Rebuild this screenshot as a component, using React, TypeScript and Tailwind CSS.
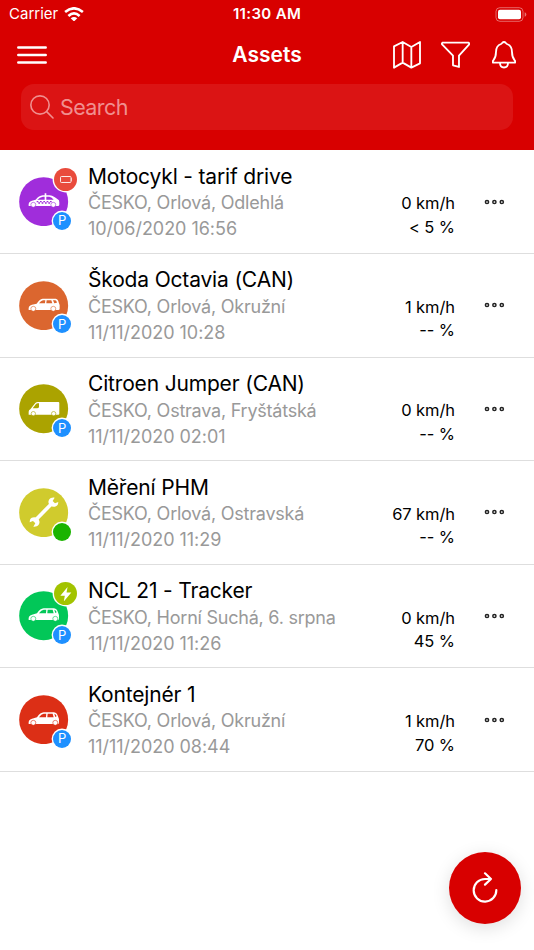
import type { ReactNode } from 'react'

type Asset = {
  name: string
  place: string
  date: string
  speed: string
  level: string
  color: string
  icon: 'taxi' | 'wagon' | 'van' | 'wrench' | 'car'
  parked: boolean
  alert?: 'battery' | 'charging'
}

const assets: Asset[] = [
  { name: 'Motocykl - tarif drive', place: 'ČESKO, Orlová, Odlehlá', date: '10/06/2020 16:56', speed: '0 km/h', level: '< 5 %', color: '#a02ddb', icon: 'taxi', parked: true, alert: 'battery' },
  { name: 'Škoda Octavia (CAN)', place: 'ČESKO, Orlová, Okružní', date: '11/11/2020 10:28', speed: '1 km/h', level: '-- %', color: '#db662f', icon: 'wagon', parked: true },
  { name: 'Citroen Jumper (CAN)', place: 'ČESKO, Ostrava, Fryštátská', date: '11/11/2020 02:01', speed: '0 km/h', level: '-- %', color: '#aba300', icon: 'van', parked: true },
  { name: 'Měření PHM', place: 'ČESKO, Orlová, Ostravská', date: '11/11/2020 11:29', speed: '67 km/h', level: '-- %', color: '#d0cb2d', icon: 'wrench', parked: false },
  { name: 'NCL 21 - Tracker', place: 'ČESKO, Horní Suchá, 6. srpna', date: '11/11/2020 11:26', speed: '0 km/h', level: '45 %', color: '#02c758', icon: 'car', parked: true, alert: 'charging' },
  { name: 'Kontejnér 1', place: 'ČESKO, Orlová, Okružní', date: '11/11/2020 08:44', speed: '1 km/h', level: '70 %', color: '#dc2f16', icon: 'car', parked: true },
]

function Wheels({ bg, x1 = 43, x2 = 103 }: { bg: string; x1?: number; x2?: number }) {
  return (
    <>
      {[x1, x2].map((x) => (
        <circle key={x} cx={x} cy="83.5" r="7.5" fill="#fff" stroke={bg} strokeWidth="1.8" />
      ))}
    </>
  )
}

function VehicleIcon({ icon, bg }: { icon: Asset['icon']; bg: string }) {
  const shapes: Record<Asset['icon'], ReactNode> = {
    wagon: (
      <>
        <path d="M29 87C28 77 31 73 39 71L53 68C59 59 64 54 71 53H110C116 54 118 58 119 64L122 72V83Q122 87 118 87Z" fill="#fff" />
        <path d="M60 67Q66 59 72 57.5H79L78 67ZM83 57.5H97L100 67H82ZM102 57.5H109Q113 59 114 65L106 67Z" fill={bg} />
        <Wheels bg={bg} />
      </>
    ),
    car: (
      <>
        <path d="M29 87C28 77 31 73 39 71L54 67C61 57 67 53 74 52H105C112 53 115 58 117 64L120 72V83Q120 87 116 87Z" fill="#fff" />
        <path d="M60 67Q67 57.5 74 56.5H82L81 67ZM86 56.5H101L104 67H85ZM106 56.5Q112 58 113 64L109 66Z" fill={bg} />
        <Wheels bg={bg} x2={109} />
      </>
    ),
    taxi: (
      <>
        <path d="M29 87C28 77 31 73 39 71L50 68C57 60 63 56 71 55H77V49H82V55H92C103 56 108 62 115 66Q122 69 121 76V83Q121 87 117 87Z" fill="#fff" />
        <path d="M55 68Q63 60 72 59H77V68ZM82 59H91Q99 61 104 68H82Z" fill={bg} />
        <path d="M53 72h5v4h-5zM63 72h5v4h-5zM73 72h5v4h-5zM83 72h5v4h-5zM93 72h5v4h-5zM58 76h5v4h-5zM68 76h5v4h-5zM78 76h5v4h-5zM88 76h5v4h-5z" fill={bg} />
        <Wheels bg={bg} />
      </>
    ),
    van: (
      <>
        <path d="M29 91V83Q29 79 34 76L49 57Q52 54 57 54H118Q121 54 121 57V89Q121 92 118 92H29Z" fill="#fff" />
        <path d="M41 73 51 60Q53 58 56 58H60V70Q58 73 54 73Z" fill={bg} />
        <circle cx="43" cy="89" r="6.5" fill="#fff" stroke={bg} strokeWidth="1.8" />
        <circle cx="104" cy="89" r="6.5" fill="#fff" stroke={bg} strokeWidth="1.8" />
      </>
    ),
    wrench: (
      <>
        <path d="M47 99 100 45" stroke="#fff" strokeWidth="11" />
        <path d="M107 29C95 26 86 36 89 46C92 58 110 61 117 49L118 42L108 46L101 39Z" fill="#fff" />
        <path d="M43 116C55 118 64 108 61 99C58 87 39 84 33 95L32 103L42 99L49 106Z" fill="#fff" />
      </>
    ),
  }
  return (
    <svg viewBox="0 0 148 148" className="size-full">
      <circle cx="74" cy="74" r="73.5" fill={bg} />
      {shapes[icon]}
    </svg>
  )
}

function Avatar({ asset }: { asset: Asset }) {
  return (
    <div className="relative mt-[26.7px] ml-[19.3px] size-[49.3px] shrink-0">
      <VehicleIcon icon={asset.icon} bg={asset.color} />
      {asset.alert && (
        <span className={`absolute -top-[9.2px] left-[35.2px] flex size-[23px] items-center justify-center rounded-full ring-[1.4px] ring-white ${asset.alert === 'battery' ? 'bg-[#e94b3c]' : 'bg-[#a2c300]'}`}>
          {asset.alert === 'battery' ? (
            <svg viewBox="0 0 36 20" className="h-[7px] w-[12.6px]" fill="none" stroke="#fff" strokeWidth="2.6">
              <rect x="1.5" y="1.5" width="30" height="17" rx="2.5" />
              <path d="M34 6V14" />
            </svg>
          ) : (
            <svg viewBox="0 0 34 42" className="h-[14.5px] w-[11.7px]" fill="#fff">
              <path d="M22 0 1 25H14L11 42 33 16H19Z" />
            </svg>
          )}
        </span>
      )}
      <span className={`absolute top-[34.8px] left-[33.8px] flex size-[18px] items-center justify-center rounded-full text-[13px] leading-none text-white ring-[1.4px] ring-white ${asset.parked ? 'bg-[#1e90ff]' : 'bg-[#1bb400]'}`}>
        {asset.parked && 'P'}
      </span>
    </div>
  )
}

function AssetRow({ asset }: { asset: Asset }) {
  return (
    <li className="flex h-[103.6px] border-b border-[#dedede]">
      <Avatar asset={asset} />
      <div className="ml-[19.4px] min-w-0 flex-1 pt-[12.5px] whitespace-nowrap">
        <h2 className="text-[21px] leading-[27px] tracking-[-0.17px] text-black">{asset.name}</h2>
        <p className="mt-[0.6px] text-[18px] leading-[26px] tracking-[-0.23px] text-[#999]">{asset.place}</p>
        <p className="text-[18px] leading-[26px] tracking-[-0.04px] text-[#999]">{asset.date}</p>
      </div>
      <div className="pt-[41.8px] text-right text-[16.5px] leading-[23.5px] tracking-[-0.1px] whitespace-nowrap text-black">
        <p>{asset.speed}</p>
        <p>{asset.level}</p>
      </div>
      <button className="mt-[48.2px] mr-[29.5px] ml-[28.6px] h-[6px] w-[21px]">
        <svg viewBox="0 0 21 6" className="block h-full w-full" fill="none" stroke="#222" strokeWidth="1.5">
          <circle cx="3" cy="3" r="1.6" />
          <circle cx="10.4" cy="3" r="1.6" />
          <circle cx="17.8" cy="3" r="1.6" />
        </svg>
      </button>
    </li>
  )
}

function StatusBar() {
  return (
    <div className="grid h-7 grid-cols-3 items-center pl-[9px]">
      <div className="flex items-center gap-[6px] text-[15px]">
        <span>Carrier</span>
        <svg viewBox="0 0 60 44" className="h-[14.5px] w-5" fill="none" stroke="#fff" strokeWidth="8">
          <path d="M3 15Q30-7 57 15" />
          <path d="M13 27Q30 12 47 27" />
          <path d="M20 34Q30 26 40 34L30 44Z" fill="#fff" stroke="none" />
        </svg>
      </div>
      <span className="-ml-[9px] text-center text-[15px] font-semibold tracking-[0.35px]">11:30 AM</span>
      <svg viewBox="0 0 32 15" className="mr-[7px] h-[15px] w-8 justify-self-end">
        <rect x="1" y=".7" width="27" height="13.6" rx="3.8" fill="none" stroke="#fff" strokeOpacity=".4" />
        <rect x="3" y="2.7" width="23" height="9.6" rx="2" fill="#fff" />
        <path d="M29.7 5.2Q31.3 5.7 31.3 7.5T29.7 9.8Z" fill="#fff" fillOpacity=".45" />
      </svg>
    </div>
  )
}

function NavBar() {
  return (
    <div className="grid h-[54px] grid-cols-3 items-center px-[17px]">
      <button className="w-[30px]">
        <svg viewBox="0 0 30 18" className="block h-[18px] w-[30px]" stroke="#fff" strokeWidth="2.5" strokeLinecap="round">
          <path d="M1.3 1.5H28.7M1.3 9H28.7M1.3 16.5H28.7" />
        </svg>
      </button>
      <h1 className="text-center text-[21px] font-semibold">Assets</h1>
      <div className="flex items-center justify-end pb-px">
        <svg viewBox="0 0 84 84" className="mr-[20px] size-7" fill="none" stroke="#fff" strokeWidth="5.5" strokeLinejoin="round">
          <path d="M3 16 29 3 55 18 81 3V67L55 80 29 65 3 80ZM29 3V65M55 18V80" />
        </svg>
        <svg viewBox="0 0 88 84" className="mr-[22px] h-7 w-[29.3px]" fill="none" stroke="#fff" strokeWidth="5.5" strokeLinejoin="round">
          <path d="M5 5H83Q86 7 84 11L54 44V78L36 73V44L4 11Q1 7 5 5Z" />
        </svg>
        <svg viewBox="0 0 72 84" className="mr-[1px] h-7 w-6" fill="none" stroke="#fff" strokeWidth="5.5" strokeLinejoin="round">
          <path d="M36 3C31 3 31 7 27 9C16 13 12 22 12 33C12 46 11 50 4 58Q1 62 3 65H69Q71 62 68 58C61 50 60 46 60 33C60 22 56 13 45 9C41 7 41 3 36 3ZM24 66C24 84 48 84 48 66" />
        </svg>
      </div>
    </div>
  )
}

export default function App() {
  return (
    <div className="flex h-[950px] w-[534px] flex-col bg-white font-['Inter','Liberation_Sans',sans-serif]">
      <header className="h-[150px] shrink-0 bg-[#d80000] text-white">
        <StatusBar />
        <NavBar />
        <div className="mx-[21px] mt-[2px] flex h-[46px] items-center gap-[6.5px] rounded-[13px] bg-[#db1414] pl-[8.5px] text-[#f08f8f]">
          <svg viewBox="0 0 72 72" className="size-6" fill="none" stroke="currentColor" strokeWidth="4.8" strokeLinecap="round">
            <circle cx="30" cy="30" r="27.5" />
            <path d="M50 50 69 69" />
          </svg>
          <span className="text-[21.5px] tracking-[-0.6px]">Search</span>
        </div>
      </header>

      <ul className="flex-1 pt-[0.4px]">
        {assets.map((asset) => (
          <AssetRow key={asset.name} asset={asset} />
        ))}
      </ul>

      {/* Refresh */}
      <button className="fixed top-[852px] left-[449px] flex size-[72px] items-center justify-center rounded-full bg-[#d80000] shadow-[0_4px_18px_rgba(0,0,0,0.13)]">
        <svg viewBox="0 0 78 94" className="h-[31.3px] w-[26px]" fill="none" stroke="#fff" strokeWidth="6.5" strokeLinecap="round" strokeLinejoin="round">
          <path d="M73 54A34 34 0 1 1 39 21H57M39 4 57 21 39 38" />
        </svg>
      </button>
    </div>
  )
}
